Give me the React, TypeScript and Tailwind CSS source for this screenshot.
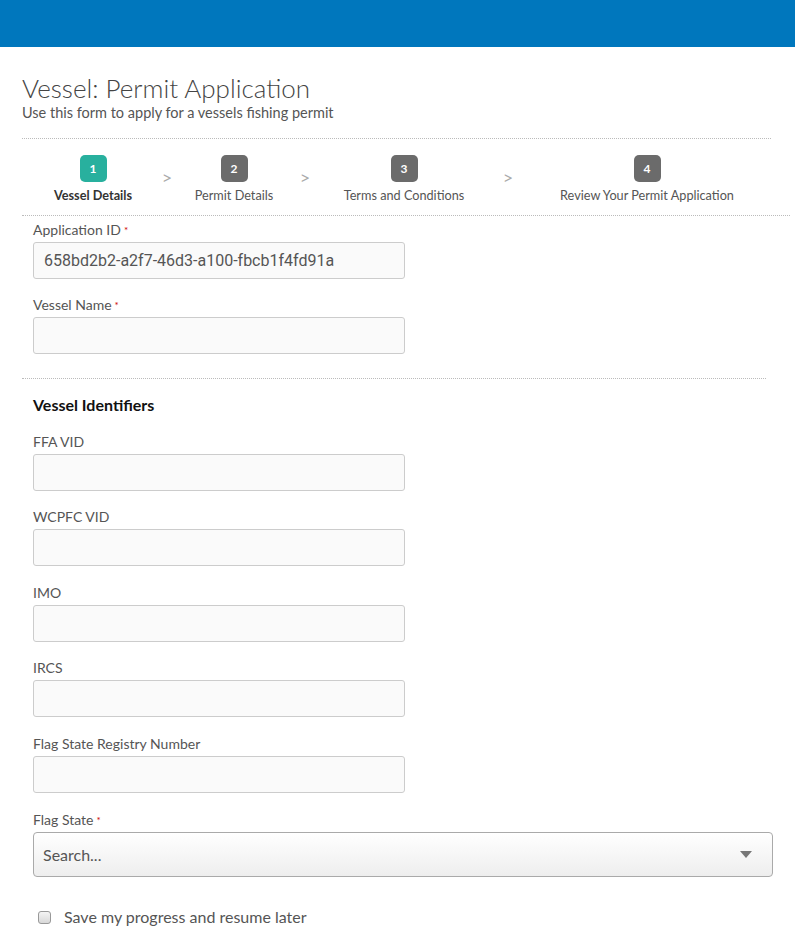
import React from "react";

const font = { fontFamily: "Lato, 'Open Sans', sans-serif" };

function Label({ text, req }: { text: string; req?: boolean }) {
  return (
    <div className="text-[14px] text-[#555] leading-[20px] h-[20px]">
      {text}
      {req && <span className="text-[#c00] text-[10px] align-top ml-[3px]">*</span>}
    </div>
  );
}

function Field({ label, req, value, mt }: { label: string; req?: boolean; value?: string; mt: string }) {
  return (
    <div className={mt}>
      <Label text={label} req={req} />
      <div className="mt-[2px] w-[372px] h-[37px] border border-[#ccc] rounded-[3px] bg-[#fafafa] flex items-center px-[10px] text-[16px] text-[#555]" style={{ fontFamily: "Roboto, sans-serif" }}>
        {value}
      </div>
    </div>
  );
}

function Step({ n, label, active, w }: { n: number; label: string; active?: boolean; w: string }) {
  return (
    <div className={`${w} flex flex-col items-center`}>
      <div className={`w-[27px] h-[27px] rounded-[5px] flex items-center justify-center text-white text-[12px] font-bold ${active ? "bg-[#28b09e]" : "bg-[#6b6b6b]"}`}>
        {n}
      </div>
      <div className={`mt-[5px] text-[12.7px] leading-[16px] whitespace-nowrap ${active ? "font-bold text-[#333]" : "text-[#555]"}`}>{label}</div>
    </div>
  );
}

function Arrow({ w }: { w: string }) {
  return <div className={`${w} flex justify-center pt-[9px] text-[18px] text-[#aaa]`}>&gt;</div>;
}

export default function App() {
  return (
    <div className="w-[795px] min-h-[941px] bg-white" style={font}>
      <div className="h-[47px] bg-[#0077bd]" />
      <div className="pl-[22px]">
        <h1 className="mt-[26px] text-[26px] leading-[30px] font-light text-[#444]">Vessel: Permit Application</h1>
        <p className="mt-[1px] text-[14.5px] leading-[18px] text-[#555]">Use this form to apply for a vessels fishing permit</p>
        <div className="mt-[16px] w-[749px] border-t border-dotted border-[#bbb]" />
        <div className="flex mt-[16px] pl-[11px]">
          <Step n={1} label="Vessel Details" active w="w-[120px]" />
          <Arrow w="w-[28px]" />
          <Step n={2} label="Permit Details" w="w-[106px]" />
          <Arrow w="w-[36px]" />
          <Step n={3} label="Terms and Conditions" w="w-[162px]" />
          <Arrow w="w-[46px]" />
          <Step n={4} label="Review Your Permit Application" w="w-[232px]" />
        </div>
        <div className="mt-[12px] w-[768px] border-t border-dotted border-[#bbb]" />
        <div className="pl-[11px]">
          <Field label="Application ID" req value="658bd2b2-a2f7-46d3-a100-fbcb1f4fd91a" mt="mt-[4px]" />
          <Field label="Vessel Name" req mt="mt-[16px]" />
        </div>
        <div className="mt-[24px] w-[744px] border-t border-dotted border-[#bbb]" />
        <div className="pl-[11px]">
          <div className="mt-[15px] text-[16px] font-bold text-[#111] leading-[22px]">Vessel Identifiers</div>
          <Field label="FFA VID" mt="mt-[16px]" />
          <Field label="WCPFC VID" mt="mt-[16px]" />
          <Field label="IMO" mt="mt-[17px]" />
          <Field label="IRCS" mt="mt-[16px]" />
          <Field label="Flag State Registry Number" mt="mt-[17px]" />
          <div className="mt-[17px]">
            <Label text="Flag State" req />
            <div className="mt-[2px] w-[740px] h-[45px] border border-[#aaa] rounded-[4px] bg-gradient-to-b from-white to-[#eee] flex items-center justify-between pl-[9px] pr-[20px]">
              <span className="text-[16px] text-[#555]">Search...</span>
              <svg width="12" height="7" viewBox="0 0 12 7"><path d="M0 0 L12 0 L6 7 Z" fill="#777" /></svg>
            </div>
          </div>
          <label className="mt-[28px] flex items-center pl-[5px]">
            <span className="w-[13px] h-[13px] border border-[#999] rounded-[3px] bg-gradient-to-b from-[#f4f4f4] to-[#d8d8d8]" />
            <span className="ml-[13px] text-[16px] text-[#555]">Save my progress and resume later</span>
          </label>
        </div>
      </div>
    </div>
  );
}
